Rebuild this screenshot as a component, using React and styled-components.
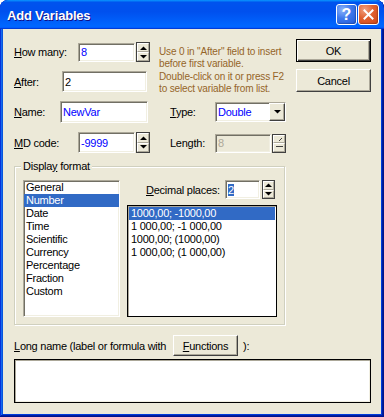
import React from 'react';
import styled, { createGlobalStyle } from 'styled-components';

const GlobalStyle = createGlobalStyle`
  html, body { margin: 0; padding: 0; background: #fff; }
  body { font-family: "Liberation Sans", Arial, sans-serif; }
`;

// window frame + title
const Window = styled.div`
  width: 384px;
  height: 417px;
  display: flex;
  flex-direction: column;
  background: #0831d9;
  border-radius: 8px 8px 0 0;
  box-shadow: inset -1px -1px #00138c, inset 1px 1px #0831d9, inset -2px -2px #001ea0,
    inset 2px 2px #166aee, inset -3px -3px #003bda, inset 3px 3px #0855dd;
  overflow: hidden;
`;

const TitleBar = styled.div`
  height: 29px;
  flex: none;
  display: flex;
  align-items: center;
  padding: 0 5px 0 7px;
  box-sizing: border-box;
  background: linear-gradient(180deg, #0997ff, #0053ee 8%, #0050ee 40%, #06f 88%, #06f 93%, #005bff 95%, #003dd7 96%, #003dd7);
  border-radius: 8px 8px 0 0;
`;

const Title = styled.div`
  flex: 1;
  color: #fff;
  font-weight: bold;
  font-size: 13px;
  letter-spacing: -0.2px;
  text-shadow: 1px 1px #0f1089;
  padding-top: 1px;
`;

const CaptionButton = styled.div`
  width: 21px;
  height: 21px;
  box-sizing: border-box;
  border: 1px solid #fff;
  border-radius: 3px;
  margin-left: ${p => p.$gap || 0}px;
  display: flex;
  align-items: center;
  justify-content: center;
  color: #fff;
  font-weight: bold;
  font-size: 16px;
  background: ${p => p.$close
    ? 'radial-gradient(circle at 30% 25%, #f0a07f 0%, #e0602f 45%, #cc4516 100%)'
    : 'radial-gradient(circle at 30% 25%, #8db4fa 0%, #3d78ec 45%, #2259d6 100%)'};
  box-shadow: inset -1px -1px 1px rgba(0, 0, 0, 0.2);
`;

const Client = styled.div`
  flex: 1;
  margin: 0 3px 3px;
  background: #ece9d8;
  display: flex;
  flex-direction: column;
  padding: 10px 10px 0 11px;
  font-size: 11px;
  letter-spacing: -0.25px;
  color: #000;
`;

// top part
const TopArea = styled.div`
  display: flex;
  align-items: flex-start;
`;

const FieldColumn = styled.div`
  width: 136px;
  margin-top: 3px;
  display: flex;
  flex-direction: column;
  gap: 9px;
`;

const Row = styled.div`
  display: flex;
  align-items: center;
  height: ${p => p.$h}px;
  margin-top: ${p => p.$mt || 0}px;
`;

const Label = styled.div`
  width: ${p => p.$w}px;
  padding-left: ${p => p.$pl || 0}px;
  flex: none;
  white-space: nowrap;
`;

const Edit = styled.div`
  width: ${p => p.$w}px;
  height: ${p => p.$h}px;
  flex: none;
  box-sizing: border-box;
  display: flex;
  align-items: center;
  padding-left: 2px;
  background: ${p => (p.$disabled ? '#ece9d8' : '#fff')};
  color: ${p => (p.$disabled ? '#aca899' : p.$blue ? '#0000ff' : '#000')};
  border: 1px solid;
  border-color: #aca899 #fff #fff #aca899;
  box-shadow: inset 1px 1px #716f64, inset -1px -1px #f1efe2;
  font-size: 11px;
  white-space: nowrap;
  overflow: hidden;
`;

const Selected = styled.span`
  background: #316ac5;
  color: #fff;
`;

const Spin = styled.div`
  width: ${p => p.$w || 14}px;
  height: ${p => p.$h}px;
  margin-left: ${p => p.$ml || 1}px;
  flex: none;
  box-sizing: border-box;
  border: 1px solid #404040;
  display: flex;
  flex-direction: column;
`;

const SpinHalf = styled.div`
  flex: 1;
  display: flex;
  align-items: center;
  justify-content: center;
  background: #ece9d8;
  border: 1px solid;
  border-color: #fff #aca899 #aca899 #fff;
`;

const Arrow = ({ up, color = '#000' }) => (
  <svg width="7" height="4" viewBox="0 0 7 4">
    <polygon points={up ? '0,4 3.5,0.5 7,4' : '0,0 7,0 3.5,3.5'} fill={color} />
  </svg>
);

const Hint = styled.div`
  margin-top: 7px;
  font-size: 10px;
  line-height: 12.4px;
  letter-spacing: -0.15px;
  color: #956528;
  white-space: nowrap;
`;

const InfoColumn = styled.div`
  width: 127px;
  margin-left: 9px;
  display: flex;
  flex-direction: column;
`;

const Combo = styled(Edit)`
  justify-content: space-between;
`;

const DropButton = styled.div`
  width: 16px;
  height: 100%;
  box-sizing: border-box;
  display: flex;
  align-items: center;
  justify-content: center;
  background: #ece9d8;
  border: 1px solid;
  border-color: #fff #404040 #404040 #fff;
  box-shadow: inset -1px -1px #aca899;
`;

const ButtonColumn = styled.div`
  margin-left: auto;
  display: flex;
  flex-direction: column;
  gap: 7px;
`;

const PushButton = styled.div`
  width: ${p => p.$w || 75}px;
  height: ${p => p.$h || 23}px;
  flex: none;
  box-sizing: border-box;
  display: flex;
  align-items: center;
  justify-content: center;
  background: #ece9d8;
  border: 1px solid ${p => (p.$default ? '#000' : '#fff')};
  ${p => (p.$default
    ? 'box-shadow: inset 1px 1px #fff, inset -1px -1px #404040, inset -2px -2px #aca899;'
    : 'border-color: #fff #404040 #404040 #fff; box-shadow: inset -1px -1px #aca899;')}
  font-size: 11px;
`;

// display format group
const GroupBox = styled.div`
  position: relative;
  margin-top: 13px;
  width: 271px;
  height: 159px;
  box-sizing: border-box;
  border: 1px solid #d0d0bf;
  box-shadow: inset 1px 1px #fff, 1px 1px #fff;
  padding: 13px 8px 0 8px;
  display: flex;
  align-items: flex-start;
`;

const Legend = styled.div`
  position: absolute;
  top: -7px;
  left: 6px;
  padding: 0 2px;
  line-height: 13px;
  background: #ece9d8;
`;

const ListBox = styled.div`
  width: ${p => p.$w}px;
  height: ${p => p.$h}px;
  flex: none;
  box-sizing: border-box;
  background: #fff;
  padding: ${p => (p.$focus ? '1px' : '0')};
  border: 1px solid;
  border-color: ${p => (p.$focus ? '#000' : '#aca899 #fff #fff #aca899')};
  box-shadow: ${p => (p.$focus
    ? 'inset 1px 1px #aca899'
    : 'inset 1px 1px #716f64, inset -1px -1px #f1efe2')};
`;

const ListItem = styled.div`
  height: 13px;
  line-height: 13px;
  padding-left: 2px;
  white-space: nowrap;
  background: ${p => (p.$selected ? '#316ac5' : 'transparent')};
  color: ${p => (p.$selected ? '#fff' : '#000')};
`;

const RightPane = styled.div`
  width: 150px;
  margin-left: 7px;
  display: flex;
  flex-direction: column;
  gap: 6px;
`;

const LongNameBox = styled.div`
  margin-top: 3px;
  width: 357px;
  height: 44px;
  box-sizing: border-box;
  background: #fff;
  border: 1px solid #000;
  box-shadow: inset 1px 1px #aca899, inset -1px -1px #f1efe2;
`;

const categories = ['General', 'Number', 'Date', 'Time', 'Scientific', 'Currency', 'Percentage', 'Fraction', 'Custom'];
const formats = ['1000,00; -1000,00', '1 000,00; -1 000,00', '1000,00; (1000,00)', '1 000,00; (1 000,00)'];

const SpinBox = ({ h, w, ml, disabled }) => (
  <Spin $h={h} $w={w} $ml={ml}>
    <SpinHalf>
      {disabled ? (
        <svg width="7" height="4" viewBox="0 0 7 4"><line x1="3" y1="4" x2="6" y2="1" stroke="#404040" /></svg>
      ) : <Arrow up />}
    </SpinHalf>
    <SpinHalf>
      {disabled ? (
        <svg width="7" height="4" viewBox="0 0 7 4"><line x1="0" y1="1.5" x2="7" y2="1.5" stroke="#404040" /></svg>
      ) : <Arrow />}
    </SpinHalf>
  </Spin>
);

export default function App() {
  return (
    <>
      <GlobalStyle />
      <Window>
        <TitleBar>
          <Title>Add Variables</Title>
          <CaptionButton>?</CaptionButton>
          <CaptionButton $close $gap={1}>
            <svg width="11" height="11" viewBox="0 0 11 11">
              <path d="M1.5 1.5 L9.5 9.5 M9.5 1.5 L1.5 9.5" stroke="#fff" strokeWidth="2" strokeLinecap="square" />
            </svg>
          </CaptionButton>
        </TitleBar>
        <Client>
          <TopArea>
            <FieldColumn>
              <Row $h={20}>
                <Label $w={64}><u>H</u>ow many:</Label>
                <Edit $w={57} $h={19} $blue>8</Edit>
                <SpinBox h={20} />
              </Row>
              <Row $h={21}>
                <Label $w={48}><u>A</u>fter:</Label>
                <Edit $w={85} $h={21}>2</Edit>
              </Row>
              <Row $h={22}>
                <Label $w={46}><u>N</u>ame:</Label>
                <Edit $w={88} $h={22} $blue>NewVar</Edit>
              </Row>
              <Row $h={21}>
                <Label $w={64}><u>M</u>D code:</Label>
                <Edit $w={57} $h={21} $blue>-9999</Edit>
                <SpinBox h={21} />
              </Row>
            </FieldColumn>
            <InfoColumn>
              <Hint>
                Use 0 in "After" field to insert<br />
                before first variable.<br />
                Double-click on it or press F2<br />
                to select variable from list.
              </Hint>
              <Row $h={20} $mt={6}>
                <Label $w={45} $pl={11}><u>T</u>ype:</Label>
                <Combo $w={71} $h={20} $blue>
                  Double
                  <DropButton><Arrow /></DropButton>
                </Combo>
              </Row>
              <Row $h={19} $mt={12}>
                <Label $w={45} $pl={11}>Length:</Label>
                <Edit $w={56} $h={19} $disabled>8</Edit>
                <SpinBox h={19} disabled />
              </Row>
            </InfoColumn>
            <ButtonColumn>
              <PushButton $default>OK</PushButton>
              <PushButton>Cancel</PushButton>
            </ButtonColumn>
          </TopArea>

          <GroupBox>
            <Legend>Displa<u>y</u> format</Legend>
            <ListBox $w={97} $h={137}>
              {categories.map(c => (
                <ListItem key={c} $selected={c === 'Number'}>{c}</ListItem>
              ))}
            </ListBox>
            <RightPane>
              <Row $h={19}>
                <Label $w={79} $pl={19}><u>D</u>ecimal places:</Label>
                <Edit $w={35} $h={19}><Selected>2</Selected></Edit>
                <SpinBox h={19} w={13} ml={2} />
              </Row>
              <ListBox $w={150} $h={112} $focus>
                {formats.map((f, i) => (
                  <ListItem key={f} $selected={i === 0}>{f}</ListItem>
                ))}
              </ListBox>
            </RightPane>
          </GroupBox>

          <Row $h={21} $mt={10}>
            <Label $w={159}><u>L</u>ong name (label or formula with</Label>
            <PushButton $w={65} $h={21}><u>F</u>unctions</PushButton>
            <Label $w={20} $pl={5}>):</Label>
          </Row>
          <LongNameBox />
        </Client>
      </Window>
    </>
  );
}
